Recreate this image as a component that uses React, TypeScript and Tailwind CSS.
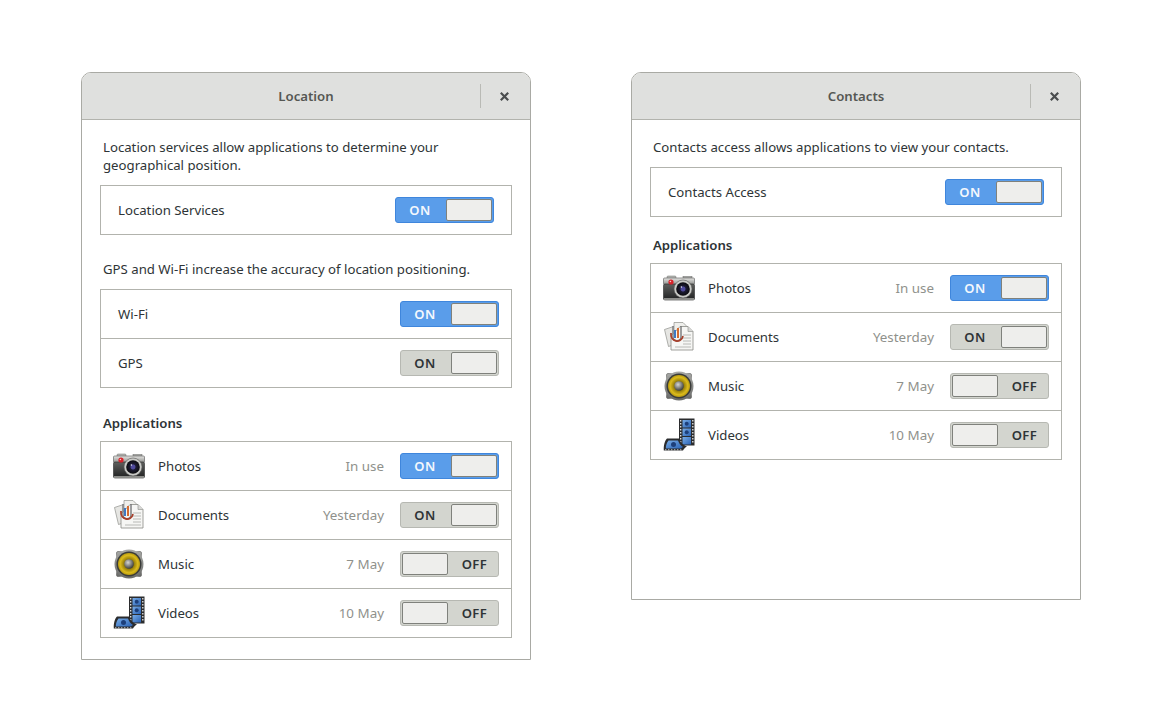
import React from 'react';

const FONT = { fontFamily: '"Noto Sans", "Open Sans", sans-serif' };

const CameraIcon = () => (
  <svg width="32" height="32" viewBox="0 0 32 32" className="shrink-0">
    <defs>
      <linearGradient id="camTop" x1="0" y1="0" x2="0" y2="1">
        <stop offset="0" stopColor="#e4e4e2" />
        <stop offset="1" stopColor="#8f908d" />
      </linearGradient>
      <linearGradient id="camBody" x1="0" y1="0" x2="0" y2="1">
        <stop offset="0" stopColor="#5f605e" />
        <stop offset="1" stopColor="#1f2021" />
      </linearGradient>
      <radialGradient id="camLens" cx="0.5" cy="0.5" r="0.5">
        <stop offset="0" stopColor="#5a55a8" />
        <stop offset="0.45" stopColor="#1c1b33" />
        <stop offset="1" stopColor="#0b0b0d" />
      </radialGradient>
    </defs>
    <rect x="4" y="4" width="9" height="3" rx="1" fill="#b9bab7" stroke="#6b6c6a" strokeWidth="0.5" />
    <rect x="20" y="4.500" width="9" height="3" fill="#a9aaa7" stroke="#6b6c6a" strokeWidth="0.5" />
    <rect x="0.500" y="6" width="31" height="6.500" rx="1" fill="url(#camTop)" stroke="#555" strokeWidth="0.6" />
    <rect x="0.500" y="12" width="31" height="16" rx="1.500" fill="url(#camBody)" stroke="#2a2a2a" strokeWidth="0.6" />
    <rect x="1" y="26" width="30" height="2" fill="#8d8e8b" />
    <circle cx="8" cy="10" r="2.600" fill="#d8232a" />
    <circle cx="7.400" cy="9.500" r="0.800" fill="#f6c6c6" />
    <circle cx="20" cy="17" r="9" fill="#c9cac7" stroke="#5a5b59" strokeWidth="0.6" />
    <circle cx="20" cy="17" r="6.800" fill="url(#camLens)" />
    <circle cx="20" cy="17" r="2.400" fill="#4f4a9c" />
    <circle cx="18.400" cy="15" r="0.800" fill="#e8e8f6" />
  </svg>
);

const DocumentsIcon = () => (
  <svg width="32" height="32" viewBox="0 0 32 32" className="shrink-0">
    <path d="M1.500 8.500 12 5l4 17-10.500 3.500z" fill="#e6e6e3" stroke="#8f908c" strokeWidth="0.7" />
    <path d="M11 1.500h9l4 4V24H11z" fill="#efefec" stroke="#8f908c" strokeWidth="0.7" />
    <path d="M17 5.500h8l5 5V29H8V15z" fill="#f6f6f4" stroke="#8a8b87" strokeWidth="0.8" />
    <path d="M25 5.500v5h5" fill="#d8d8d5" stroke="#8a8b87" strokeWidth="0.6" />
    <path d="M20 14h8M20 17h8M20 20h8M20 23h8M12 26h16" stroke="#aaaba7" strokeWidth="0.8" />
    <path d="M10 5v11c0 5 8 5 8 0V5" fill="none" stroke="#77787a" strokeWidth="1.400" />
    <path d="M8 12c-1 9 10 11 12 3" fill="none" stroke="#a8402c" strokeWidth="1.800" />
    <rect x="11" y="9" width="2" height="8" fill="#3f78c4" />
    <rect x="14" y="7" width="2" height="10" fill="#d36b32" />
  </svg>
);

const MusicIcon = () => (
  <svg width="32" height="32" viewBox="0 0 32 32" className="shrink-0">
    <defs>
      <linearGradient id="spkFrame" x1="0" y1="0" x2="0" y2="1">
        <stop offset="0" stopColor="#a8a9a6" />
        <stop offset="1" stopColor="#6a6b69" />
      </linearGradient>
      <radialGradient id="spkCone" cx="0.5" cy="0.5" r="0.5">
        <stop offset="0.4" stopColor="#8a7406" />
        <stop offset="0.8" stopColor="#dcbb1c" />
        <stop offset="1" stopColor="#b79a10" />
      </radialGradient>
      <radialGradient id="spkCap" cx="0.4" cy="0.35" r="0.7">
        <stop offset="0" stopColor="#d6d6d3" />
        <stop offset="1" stopColor="#333432" />
      </radialGradient>
    </defs>
    <path d="M5 3.500Q16 5 27 3.500q1.500 0 1.500 1.500Q27 16 28.500 27q0 1.500-1.500 1.500Q16 27 5 28.500q-1.500 0-1.500-1.500Q5 16 3.500 5q0-1.500 1.500-1.500z" fill="url(#spkFrame)" stroke="#555654" strokeWidth="0.6" />
    <circle cx="16" cy="16" r="14.500" fill="url(#spkFrame)" />
    <circle cx="16" cy="16" r="12.500" fill="#3a3b39" />
    <circle cx="16" cy="16" r="11" fill="url(#spkCone)" />
    <circle cx="16" cy="16" r="4.800" fill="url(#spkCap)" />
  </svg>
);

const VideosIcon = () => (
  <svg width="32" height="34" viewBox="0 0 32 34" className="shrink-0">
    <defs>
      <linearGradient id="filmBlue" x1="0" y1="0" x2="1" y2="1">
        <stop offset="0" stopColor="#78ade8" />
        <stop offset="1" stopColor="#2a62b4" />
      </linearGradient>
    </defs>
    <rect x="16" y="0.500" width="15.500" height="27" fill="#2b2c2e" />
    <rect x="19.500" y="2" width="8.500" height="7.500" fill="url(#filmBlue)" />
    <rect x="19.500" y="10.500" width="8.500" height="7.500" fill="url(#filmBlue)" />
    <rect x="19.500" y="19" width="8.500" height="7.500" fill="url(#filmBlue)" />
    <path d="M17.700 2v24M29.800 2v24" stroke="#e6e6e6" strokeWidth="1.300" strokeDasharray="1.400 1.600" />
    <circle cx="23.700" cy="5.700" r="2" fill="#1d3f7a" />
    <circle cx="23.700" cy="14.200" r="2" fill="#1d3f7a" />
    <path d="M4 20.500H16c1 3 3 6 8 8-2 1-3 2-4 4H0.800C0.500 28 1.500 23 4 20.500z" fill="#2b2c2e" />
    <path d="M5.500 22.500H15c.8 2.500 2.500 5 5 6.500-1 .5-1.500 1-2 1.500H2.800c0-3 1-6 2.700-8z" fill="url(#filmBlue)" />
    <path d="M2 31.800h17" stroke="#d8d8d8" strokeWidth="0.9" strokeDasharray="1.400 1.600" />
    <circle cx="10.500" cy="26.500" r="2.500" fill="#1d3f7a" />
  </svg>
);

const CloseIcon = () => (
  <svg width="9" height="9" viewBox="0 0 9 9" className="absolute right-[21px] top-[19px]">
    <path d="M0.800 0.800 8.200 8.200M8.200 0.800 0.800 8.200" stroke="#4a4d4e" strokeWidth="2.200" />
  </svg>
);

const ICONS: Record<string, React.ReactNode> = {
  Photos: <CameraIcon />,
  Documents: <DocumentsIcon />,
  Music: <MusicIcon />,
  Videos: <VideosIcon />,
};

type SwitchState = 'active' | 'on' | 'off';

const Switch = ({ state }: { state: SwitchState }) => {
  if (state === 'off') {
    return (
      <div className="flex h-[26px] w-[99px] shrink-0 items-center rounded-[3px] border border-[#b6b8b2] bg-[#d3d5cf] pl-px">
        <div className="h-[22px] w-[46px] rounded-[2px] border border-[#7f817c] bg-[#eeeeec]" />
        <span className="flex-1 pl-[3px] pt-px text-center text-[13px] font-semibold tracking-[0.5px] text-[#2e3436]">OFF</span>
      </div>
    );
  }
  const active = state === 'active';
  return (
    <div
      className={`flex h-[26px] w-[99px] shrink-0 items-center rounded-[3px] border pr-px ${
        active ? 'border-[#3f86dc] bg-[#5a9dea]' : 'border-[#b6b8b2] bg-[#d3d5cf]'
      }`}
    >
      <span className={`flex-1 pr-[2px] pt-px text-center text-[13px] font-semibold tracking-[0.5px] ${active ? 'text-[#f4f8fd]' : 'text-[#2e3436]'}`}>ON</span>
      <div className="h-[22px] w-[46px] rounded-[2px] border border-[#7f817c] bg-[#eeeeec]" />
    </div>
  );
};

const SimpleRow = ({ label, state }: { label: string; state: SwitchState }) => (
  <div className="flex h-[49px] items-center justify-between pl-[17px] pr-[12px] last:h-[48px]">
    <span className="pt-px text-[13.2px] text-[#2e3436]">{label}</span>
    <Switch state={state} />
  </div>
);

const AppRow = ({ name, when, state }: { name: string; when: string; state: SwitchState }) => (
  <div className="flex h-[49px] items-center pl-[12px] pr-[12px] last:h-[48px]">
    <div className="flex w-[32px] shrink-0 items-center justify-center">{ICONS[name]}</div>
    <span className="ml-[13px] flex-1 pt-px text-[13.2px] text-[#2e3436]">{name}</span>
    <span className="mr-[16px] pt-px text-[13.4px] text-[#8f918c]">{when}</span>
    <Switch state={state} />
  </div>
);

const ListBox = ({ children, className = '' }: { children: React.ReactNode; className?: string }) => (
  <div className={`border border-[#b2b3ad] divide-y divide-[#b2b3ad] ${className}`}>{children}</div>
);

const AppList = ({ states }: { states: SwitchState[] }) => (
  <ListBox className="mt-[9px]">
    <AppRow name="Photos" when="In use" state={states[0]} />
    <AppRow name="Documents" when="Yesterday" state={states[1]} />
    <AppRow name="Music" when="7 May" state={states[2]} />
    <AppRow name="Videos" when="10 May" state={states[3]} />
  </ListBox>
);

const Dialog = ({ title, height, children }: { title: string; height: string; children: React.ReactNode }) => (
  <div className={`w-[450px] rounded-t-[10px] border border-[#a9aaa4] bg-white ${height}`}>
    <div className="relative flex h-[47px] items-center justify-center rounded-t-[9px] border-b border-[#b2b3ad] bg-[#dfe0de]">
      <span className="pt-px text-[13.2px] font-semibold text-[#555753]">{title}</span>
      <div className="absolute right-[49px] top-[11px] h-[24px] w-px bg-[#b9bab5]" />
      <CloseIcon />
    </div>
    <div className="px-[18px] pt-[18px]">{children}</div>
  </div>
);

const Para = ({ children, className = '' }: { children: React.ReactNode; className?: string }) => (
  <p className={`px-[3px] text-[13.2px] leading-[18px] text-[#2e3436] ${className}`}>{children}</p>
);

const Heading = ({ children, className = '' }: { children: React.ReactNode; className?: string }) => (
  <h3 className={`px-[3px] text-[13.2px] font-semibold leading-[18px] text-[#2e3436] ${className}`}>{children}</h3>
);

export default function App() {
  return (
    <div className="flex h-[720px] w-[1160px] items-start gap-[100px] bg-white pl-[81px] pt-[72px]" style={FONT}>
      <Dialog title="Location" height="h-[588px]">
        <Para>
          Location services allow applications to determine your
          <br />
          geographical position.
        </Para>
        <ListBox className="mt-[11px]">
          <div className="flex h-[48px] items-center justify-between pl-[17px] pr-[17px]">
            <span className="pt-px text-[13.2px] text-[#2e3436]">Location Services</span>
            <Switch state="active" />
          </div>
        </ListBox>
        <Para className="mt-[25px]">GPS and Wi-Fi increase the accuracy of location positioning.</Para>
        <ListBox className="mt-[11px]">
          <SimpleRow label="Wi-Fi" state="active" />
          <SimpleRow label="GPS" state="on" />
        </ListBox>
        <Heading className="mt-[26px]">Applications</Heading>
        <AppList states={['active', 'on', 'off', 'off']} />
      </Dialog>
      <Dialog title="Contacts" height="h-[528px]">
        <Para>Contacts access allows applications to view your contacts.</Para>
        <ListBox className="mt-[11px]">
          <div className="flex h-[48px] items-center justify-between pl-[17px] pr-[17px]">
            <span className="pt-px text-[13.2px] text-[#2e3436]">Contacts Access</span>
            <Switch state="active" />
          </div>
        </ListBox>
        <Heading className="mt-[19px]">Applications</Heading>
        <AppList states={['active', 'on', 'off', 'off']} />
      </Dialog>
    </div>
  );
}
